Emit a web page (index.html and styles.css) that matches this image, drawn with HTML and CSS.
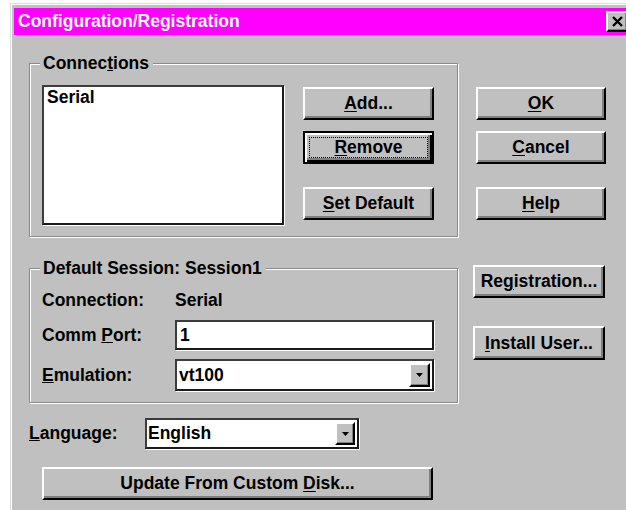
FILE: index.html
```html
<!DOCTYPE html>
<html lang="en">
<head>
<meta charset="utf-8">
<title>Configuration/Registration</title>
<link rel="stylesheet" href="styles.css">
</head>
<body>
<div class="dialog">
  <div class="titlebar">
    <span class="title">Configuration/Registration</span>
    <button class="close" aria-label="Close">
      <svg width="11" height="11" viewBox="0 0 11 11"><path d="M1 1 L10 10 M10 1 L1 10" stroke="#000" stroke-width="2.4" fill="none"/></svg>
    </button>
  </div>

  <div class="content">
    <div class="row row-conn">
      <fieldset class="group">
        <legend>Connec<u>t</u>ions</legend>
        <div class="conn-inner">
          <div class="field listbox">
            <div class="item">Serial</div>
          </div>
          <div class="btncol conn-btns">
            <button class="btn"><u>A</u>dd...</button>
            <button class="btn btn-default"><u>R</u>emove</button>
            <button class="btn btn-last"><u>S</u>et Default</button>
          </div>
        </div>
      </fieldset>
      <div class="btncol side-btns">
        <button class="btn"><u>O</u>K</button>
        <button class="btn"><u>C</u>ancel</button>
        <button class="btn btn-last"><u>H</u>elp</button>
      </div>
    </div>

    <div class="row row-session">
      <fieldset class="group">
        <legend>Default Session: Session1</legend>
        <div class="form">
          <span class="lbl">Connection:</span>
          <span class="val">Serial</span>
          <span class="lbl">Comm <u>P</u>ort:</span>
          <div class="field textbox">1</div>
          <span class="lbl"><u>E</u>mulation:</span>
          <div class="field combo combo-emu">
            <span class="combo-text">vt100</span>
            <span class="drop"><svg width="7" height="4" viewBox="0 0 7 4"><polygon points="0,0 7,0 3.5,4" fill="#000"/></svg></span>
          </div>
        </div>
      </fieldset>
      <div class="btncol reg-btns">
        <button class="btn btn-reg">Re<u>g</u>istration...</button>
        <button class="btn btn-install"><u>I</u>nstall User...</button>
      </div>
    </div>

    <div class="lang-row">
      <span class="lang-lbl"><u>L</u>anguage:</span>
      <div class="field combo combo-lang">
        <span class="combo-text">English</span>
        <span class="drop drop-sm"><svg width="7" height="4" viewBox="0 0 7 4"><polygon points="0,0 7,0 3.5,4" fill="#000"/></svg></span>
      </div>
    </div>

    <button class="btn btn-update">Update From Custom <u>D</u>isk...</button>
  </div>
</div>
</body>
</html>
```

FILE: styles.css
```css
html, body {
  margin: 0;
  padding: 0;
  overflow: hidden;
  background: #fff;
}

body {
  font-family: "Liberation Sans", Arial, sans-serif;
  font-weight: bold;
  font-size: 17.5px;
  color: #000;
}

/* window frame */
.dialog {
  box-sizing: border-box;
  width: 622px;
  height: 507px;
  margin: 3px 0 0 10px;
  padding: 4px 4px 0 3px;
  background: #c0c0c0;
  border-top: 1px solid #dcdcdc;
  border-left: 1px solid #dcdcdc;
  box-shadow: inset 1px 1px 0 #fff;
}

.titlebar {
  height: 27px;
  display: flex;
  align-items: center;
  justify-content: space-between;
  background: #ff00ff;
  color: #fff;
  padding-left: 4px;
}

.title {
  line-height: 27px;
  white-space: nowrap;
}

.close {
  box-sizing: border-box;
  width: 22px;
  height: 21px;
  padding: 0;
  display: flex;
  align-items: center;
  justify-content: center;
  background: #c0c0c0;
  border: 2px solid;
  border-color: #fff #000 #000 #fff;
  box-shadow: inset -1px -1px 0 #808080;
}

.content {
  padding: 19px 0 0 15px;
}

.row {
  display: flex;
  align-items: flex-start;
}

/* etched group boxes */
.group {
  box-sizing: border-box;
  width: 429px;
  min-width: 0;
  margin: 0;
  padding: 13px 23px 11px 12px;
  border: 1px solid #8a8a8a;
  box-shadow: inset 1px 1px 0 #fff, 1px 1px 0 #fff;
}

.group legend {
  padding: 0 4px 0 3px;
  margin-left: -2px;
  line-height: 18px;
  background: #c0c0c0;
}

/* push buttons */
.btn {
  box-sizing: border-box;
  display: block;
  height: 33px;
  padding: 0;
  font: inherit;
  color: #000;
  text-align: center;
  white-space: nowrap;
  background: #c0c0c0;
  border: 2px solid;
  border-color: #fff #000 #000 #fff;
  box-shadow: inset -2px -2px 0 #808080;
}

.btn u {
  text-underline-offset: 2px;
}

.btn-default {
  border-color: #000;
  box-shadow: inset 2px 2px 0 #fff, inset -2px -2px 0 #000, inset -4px -4px 0 #808080;
  outline: 1px dotted #000;
  outline-offset: -7px;
}

.btncol {
  display: flex;
  flex-direction: column;
}

/* connections box */
.conn-inner {
  display: flex;
  align-items: flex-start;
  gap: 19px;
}

.field {
  box-sizing: border-box;
  background: #fff;
  border: 2px solid;
  border-color: #3c3c3c #1a1a1a #1a1a1a #3c3c3c;
  box-shadow: 1px 1px 0 #fff;
}

.listbox {
  width: 242px;
  height: 140px;
  padding: 1px 3px;
  line-height: 18px;
}

.conn-btns {
  width: 131px;
  padding-top: 2px;
  gap: 11px;
}

.conn-btns .btn-last,
.side-btns .btn-last {
  margin-top: 12px;
}

.side-btns {
  width: 130px;
  margin: 33px 0 0 18px;
  gap: 11px;
}

.side-btns .btn {
  width: 130px;
}

/* default session box */
.row-session {
  margin-top: 22px;
}

.form {
  display: grid;
  grid-template-columns: 133px 259px;
  grid-template-rows: 20px 30px 32px;
  row-gap: 9.5px;
  align-items: center;
}

.lbl,
.val {
  line-height: 20px;
  white-space: nowrap;
}

.textbox {
  height: 30px;
  padding: 0 3px;
  line-height: 26px;
}

.combo {
  display: flex;
  align-items: center;
}

.combo-text {
  flex: 1;
  padding-left: 2px;
}

.combo-emu {
  height: 32px;
}

.drop {
  box-sizing: border-box;
  width: 21px;
  height: 24px;
  margin-right: 2px;
  display: flex;
  align-items: center;
  justify-content: center;
  background: #c0c0c0;
  border: 2px solid;
  border-color: #fff #000 #000 #fff;
  box-shadow: inset -1px -1px 0 #808080;
}

.drop-sm {
  width: 20px;
  height: 23px;
}

.reg-btns {
  width: 132px;
  margin: 6px 0 0 15px;
  gap: 28px;
}

.btn-install {
  height: 34px;
}

/* language + update */
.lang-row {
  display: flex;
  align-items: center;
  margin-top: 15px;
}

.lang-lbl {
  width: 116px;
}

.combo-lang {
  width: 214px;
  height: 31px;
}

.combo-lang .combo-text {
  padding-left: 1px;
}

.btn-update {
  width: 391px;
  margin: 18px 0 0 13px;
}
```
